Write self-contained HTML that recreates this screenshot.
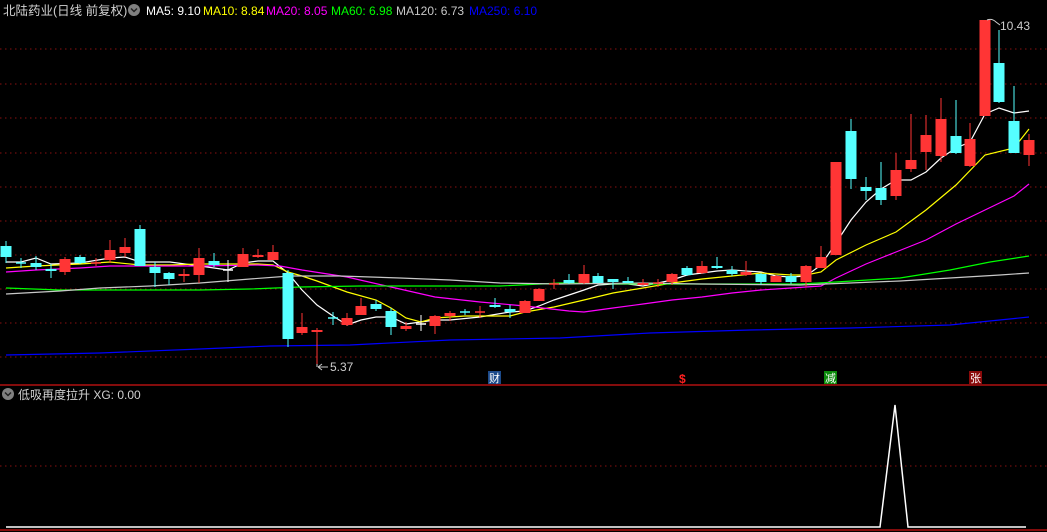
<!DOCTYPE html>
<html><head><meta charset="utf-8"><style>
html,body{margin:0;padding:0;background:#000;width:1047px;height:532px;overflow:hidden}
svg{position:absolute;left:0;top:0}
text{font-family:"Liberation Sans","Noto Sans CJK SC",sans-serif}
</style></head><body>
<svg id="s" width="1047" height="532" xmlns="http://www.w3.org/2000/svg">
<g stroke="#8a1010" stroke-dasharray="1.5,3.5" stroke-width="1">
<line x1="0" y1="49" x2="1047" y2="49"/><line x1="0" y1="84" x2="1047" y2="84"/>
<line x1="0" y1="118" x2="1047" y2="118"/><line x1="0" y1="153" x2="1047" y2="153"/>
<line x1="0" y1="187" x2="1047" y2="187"/><line x1="0" y1="221" x2="1047" y2="221"/>
<line x1="0" y1="255" x2="1047" y2="255"/><line x1="0" y1="289" x2="1047" y2="289"/>
<line x1="0" y1="323" x2="1047" y2="323"/><line x1="0" y1="357" x2="1047" y2="357"/>
<line x1="0" y1="466" x2="1047" y2="466"/>
</g>
<line x1="0" y1="385" x2="1047" y2="385" stroke="#b01010" stroke-width="1.5"/>
<line x1="0" y1="530" x2="1047" y2="530" stroke="#b01010" stroke-width="1.5"/>
<g id="ma" fill="none" stroke-width="1.2"></g>
<g id="cd"></g>
<text x="3" y="15" font-size="12.5" fill="#d0d0d0">北陆药业(日线 前复权)</text>
<circle cx="134" cy="10" r="6" fill="#808080"/><path d="M131 8.5 L134 11.5 L137 8.5" stroke="#222" stroke-width="1.5" fill="none"/>
<text x="146" y="15" font-size="12" fill="#fff">MA5: 9.10</text>
<text x="203" y="15" font-size="12" fill="#ffff00">MA10: 8.84</text>
<text x="266" y="15" font-size="12" fill="#ff00ff">MA20: 8.05</text>
<text x="331" y="15" font-size="12" fill="#00ff00">MA60: 6.98</text>
<text x="396" y="15" font-size="12" fill="#c8c8c8">MA120: 6.73</text>
<text x="469" y="15" font-size="12" fill="#0000ff">MA250: 6.10</text>
<line x1="317" y1="364" x2="317" y2="367" stroke="#ccc"/>
<path d="M318 367 H328 M318 367 L322 364 M318 367 L322 370" stroke="#ccc" fill="none"/>
<text x="330" y="371" font-size="12" fill="#ccc">5.37</text>
<path d="M987 20 Q992 18 996 22 L1000 25" stroke="#ccc" fill="none"/>
<text x="1000" y="30" font-size="12" fill="#ccc">10.43</text>
<rect x="488" y="371" width="13" height="13" fill="#1c4a8a"/><text x="489" y="382" font-size="11" fill="#fff">财</text>
<text x="679" y="383" font-size="12" font-weight="bold" fill="#ff2020">$</text>
<rect x="824" y="371" width="13" height="13" fill="#0a8a0a"/><text x="825" y="382" font-size="11" fill="#fff">减</text>
<rect x="969" y="371" width="13" height="13" fill="#8a0a0a"/><text x="970" y="382" font-size="11" fill="#fff">张</text>
<circle cx="8" cy="394" r="6" fill="#808080"/><path d="M5 392.5 L8 395.5 L11 392.5" stroke="#222" stroke-width="1.5" fill="none"/>
<text x="18" y="399" font-size="12" fill="#d0d0d0">低吸再度拉升 XG: 0.00</text>
<polyline points="6,527 880,527 895,405 908,527 1026,527" fill="none" stroke="#fff" stroke-width="1.5"/>
</svg>
<script>
var C=[[6,'c',246,257,241,263],[21,'cx',263,263,258,268],[36,'c',263,267,256,270],[51,'c',269,270,264,278],[65,'r',259,272,257,275],[80,'c',257,263,255,264],[96,'rx',263,263,258,266],[110,'r',250,260,240,263],[125,'r',247,253,238,257],[140,'c',229,266,225,266],[155,'c',267,273,262,287],[169,'c',273,279,272,285],[184,'r',274,276,269,282],[199,'r',258,275,248,283],[214,'c',261,265,253,267],[228,'wx',270,270,260,282],[243,'r',254,267,248,267],[258,'r',255,257,249,258],[273,'r',252,260,245,260],[288,'c',273,339,270,347],[302,'r',327,333,313,335],[317,'r',330,332,328,366],[333,'cx',318,318,312,325],[347,'r',318,325,313,326],[361,'r',306,315,298,315],[376,'c',304,309,300,311],[391,'c',311,327,308,335],[406,'r',326,329,322,331],[421,'wx',324,324,315,331],[435,'r',316,326,315,334],[450,'r',313,316,311,321],[465,'cx',312,312,309,315],[480,'rx',312,312,306,318],[495,'c',305,307,298,308],[510,'c',309,312,305,318],[525,'r',301,313,300,313],[539,'r',289,301,288,301],[554,'rx',284,284,279,289],[569,'c',280,283,274,284],[584,'r',274,283,265,284],[598,'c',276,283,273,283],[613,'c',279,282,279,289],[628,'c',281,282,277,283],[643,'r',283,284,279,285],[658,'rx',283,283,279,287],[672,'r',274,282,273,285],[687,'c',268,275,266,276],[702,'r',266,273,261,274],[717,'c',266,268,257,269],[732,'c',270,274,266,276],[746,'r',272,275,261,276],[761,'c',274,282,273,285],[776,'r',276,282,275,282],[791,'c',276,282,273,284],[806,'r',266,282,265,287],[821,'r',257,268,246,268],[836,'r',162,255,162,255],[851,'c',131,179,119,189],[866,'c',187,191,177,200],[881,'c',188,200,162,205],[896,'r',170,196,153,200],[911,'r',160,169,114,172],[926,'r',135,152,115,170],[941,'r',119,156,98,162],[956,'c',136,153,100,154],[970,'r',139,166,123,167],[985,'r',20,116,20,116],[999,'c',63,102,30,103],[1014,'c',121,153,86,153],[1029,'r',140,155,134,166]];
var ns='http://www.w3.org/2000/svg',cd=document.getElementById('cd'),h='';
C.forEach(function(d){var x=d[0],t=d[1],col=t[0]=='r'?'#ff3535':(t[0]=='c'?'#55ffff':'#ffffff');
h+='<line x1="'+x+'" y1="'+d[4]+'" x2="'+x+'" y2="'+d[5]+'" stroke="'+col+'" stroke-width="1"/>';
if(t.length>1){h+='<line x1="'+(x-5)+'" y1="'+d[2]+'" x2="'+(x+5)+'" y2="'+d[2]+'" stroke="'+col+'" stroke-width="1.5"/>';}
else{h+='<rect x="'+(x-5.5)+'" y="'+d[2]+'" width="11" height="'+Math.max(2,d[3]-d[2])+'" fill="'+col+'"/>';}});
cd.innerHTML=h;
var M=[['#ffffff','6,262 21,262 36,258 51,264 80,263 110,258 125,257 140,262 170,262 200,266 228,270 243,263 258,261 273,261 288,273 302,290 317,305 333,316 347,325 361,320 376,317 391,317 406,324 421,322 435,320 450,320 480,317 510,312 525,311 539,306 554,300 569,295 584,290 598,285 613,284 628,284 643,286 658,283 672,280 687,275 702,273 717,271 732,270 746,271 761,272 776,276 791,277 806,276 821,265 836,243 851,220 866,202 881,189 896,180 911,180 926,172 941,158 956,148 970,142 985,114 999,108 1014,113 1029,111'],
['#ffff00','6,268 36,266 80,264 110,262 140,265 170,265 200,264 228,264 258,264 273,265 288,272 302,276 317,281 347,292 376,300 391,308 406,318 421,322 435,318 465,316 510,316 525,312 554,307 584,300 613,293 643,288 672,283 702,279 732,276 761,273 791,275 806,275 821,272 836,260 866,245 896,232 926,210 956,185 985,155 1014,148 1029,129'],
['#ff00ff','6,272 36,270 80,268 110,266 140,266 200,266 258,265 280,266 302,270 347,277 391,287 435,297 480,302 525,306 569,311 584,312 613,308 643,304 672,300 702,297 732,293 761,290 791,288 806,287 821,286 836,278 866,264 896,252 926,240 956,224 985,210 1014,196 1029,184'],
['#00ff00','6,288 60,290 150,290 200,290 250,289 300,287 360,286 500,286 560,283 650,284 800,284 836,282 900,278 950,270 990,262 1029,256'],
['#c8c8c8','6,294 60,291 100,288 150,286 200,283 250,279 290,276 340,276 400,278 450,280 500,283 560,284 640,283 700,284 800,285 850,283 900,281 950,278 1000,275 1029,273'],
['#0000ff','6,355 100,353 200,349 270,346 350,345 450,340 560,338 650,333 750,330 850,328 950,325 1029,317']];
var g='';M.forEach(function(m){g+='<polyline points="'+m[1]+'" stroke="'+m[0]+'"/>';});
document.getElementById('ma').innerHTML=g;
</script>
</body></html>
